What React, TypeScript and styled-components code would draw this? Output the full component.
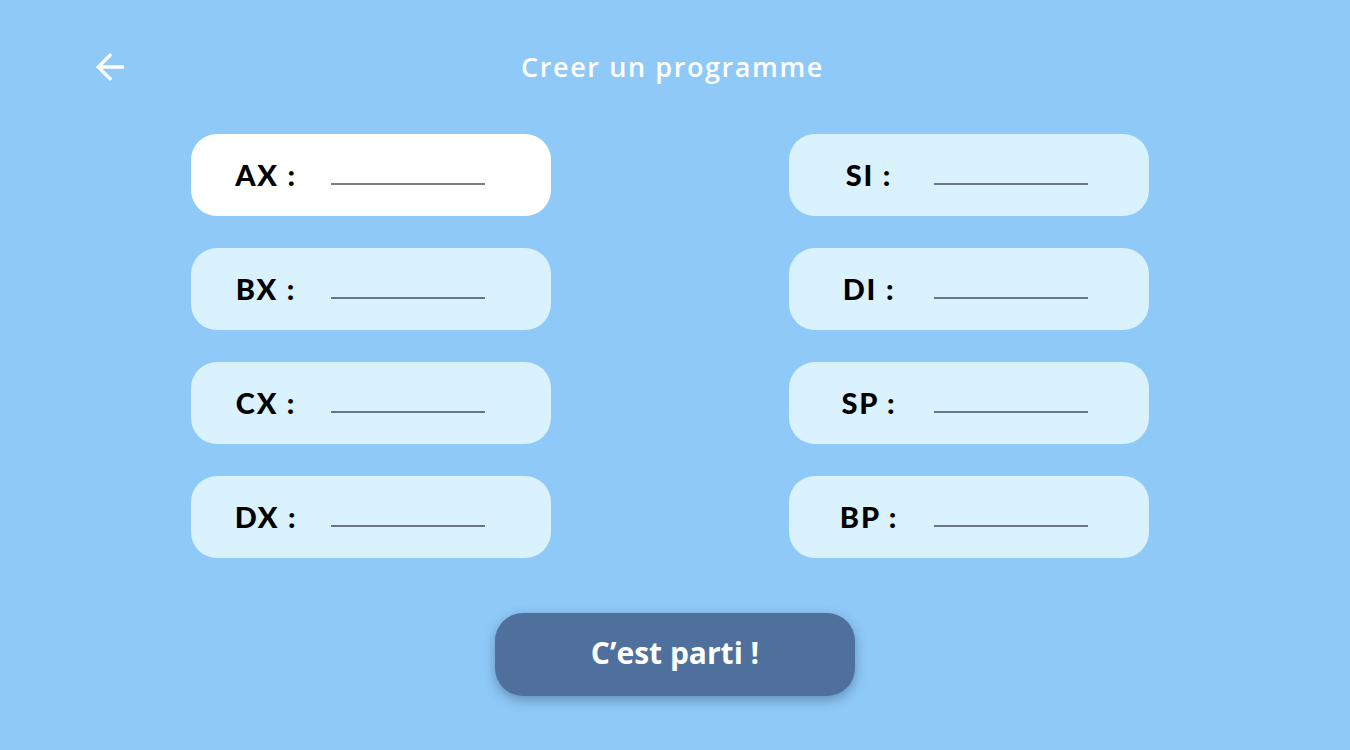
import React from "react";
import styled, { createGlobalStyle } from "styled-components";

const Global = createGlobalStyle`
  html, body { margin: 0; padding: 0; }
  body { background: #8fc9f7; font-family: "Open Sans", sans-serif; }
`;

const Page = styled.div`
  width: 1350px;
  height: 750px;
  background: #8fc9f7;
  display: flex;
  flex-direction: column;
`;

const Header = styled.header`
  height: 134px;
  display: grid;
  grid-template-columns: 1fr auto 1fr;
  align-items: center;
  padding: 0 95px;
  box-sizing: border-box;
`;

const BackButton = styled.button`
  justify-self: start;
  background: none;
  border: none;
  padding: 0;
  width: 30px;
  height: 30px;
  display: flex;
  align-items: center;
  justify-content: center;
  cursor: pointer;
`;

const Title = styled.h1`
  margin: 0 0 2px -5px;
  color: #ffffff;
  font-family: "Open Sans", sans-serif;
  font-weight: 600;
  font-size: 27px;
  letter-spacing: 1.6px;
`;

const Grid = styled.div`
  display: grid;
  grid-template-columns: 360px 360px;
  column-gap: 238px;
  row-gap: 32px;
  margin-left: 191px;
`;

const Field = styled.label<{ $active?: boolean; $shift: number }>`
  height: 82px;
  border-radius: 26px;
  background: ${(p) => (p.$active ? "#ffffff" : "#daf1fe")};
  display: flex;
  align-items: center;
  padding-left: ${(p) => 20 + p.$shift}px;
  box-sizing: border-box;
`;

const Label = styled.span`
  width: 110px;
  text-align: center;
  font-family: "Lato", sans-serif;
  font-weight: 900;
  font-size: 29px;
  color: #000;
  letter-spacing: 1.8px;
  margin-bottom: 2px;
`;

const Input = styled.input<{ $active?: boolean }>`
  margin-left: 10px;
  width: 154px;
  height: 20px;
  box-sizing: border-box;
  background: transparent;
  border: none;
  border-bottom: 2px solid ${(p) => (p.$active ? "#7d7d7d" : "#6a7881")};
  outline: none;
  padding: 0;
  font-size: 16px;
`;

const Footer = styled.div`
  display: flex;
  justify-content: center;
  margin-top: 55px;
`;

const Go = styled.button`
  width: 360px;
  height: 83px;
  border-radius: 28px;
  border: none;
  background: #4f709d;
  color: #ffffff;
  font-family: "Open Sans", sans-serif;
  font-weight: 700;
  font-size: 30px;
  padding: 0 0 5px;
  box-shadow: 0 4px 12px rgba(40, 70, 110, 0.45);
  cursor: pointer;
`;

const left = ["AX", "BX", "CX", "DX"];
const right = ["SI", "DI", "SP", "BP"];

export default function App() {
  const rows = left.map((l, i) => [l, right[i]]);
  return (
    <>
      <Global />
      <Page>
        <Header>
          <BackButton aria-label="Retour">
            <svg width="32" height="32" viewBox="0 0 32 32" fill="none">
              <path
                d="M29 16H4M16 3.5L3.5 16L16 28.5"
                stroke="#ffffff"
                strokeWidth="3.6"
                strokeLinecap="square"
              />
            </svg>
          </BackButton>
          <Title>Creer un programme</Title>
          <div />
        </Header>
        <Grid>
          {rows.map(([a, b], i) => (
            <React.Fragment key={a}>
              <Field $active={i === 0} $shift={0}>
                <Label>{a} :</Label>
                <Input $active={i === 0} />
              </Field>
              <Field $shift={5}>
                <Label>{b} :</Label>
                <Input />
              </Field>
            </React.Fragment>
          ))}
        </Grid>
        <Footer>
          <Go>C’est parti !</Go>
        </Footer>
      </Page>
    </>
  );
}
